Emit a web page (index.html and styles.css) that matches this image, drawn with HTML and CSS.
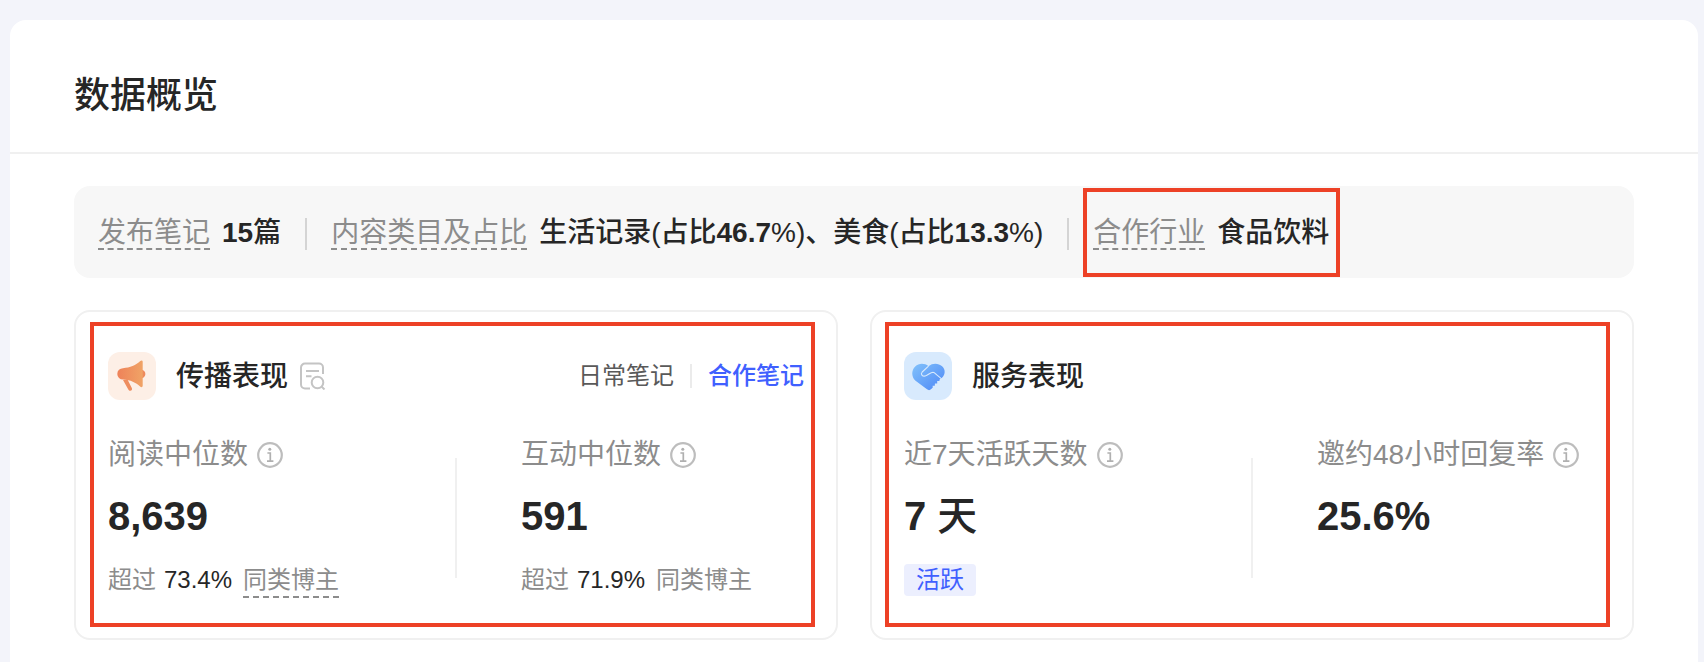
FILE: index.html
```html
<!DOCTYPE html>
<html lang="zh-CN">
<head>
  <meta charset="UTF-8" />
  <meta name="viewport" content="width=device-width, initial-scale=1.0"/>
  <title>数据概览</title>
  <link rel="stylesheet" href="styles.css">
</head>
<body>
  <!-- shared icon -->
  <svg class="defs" width="0" height="0" aria-hidden="true">
    <symbol id="info" viewBox="0 0 26 26">
      <circle cx="13" cy="13" r="11.8" fill="none" stroke="#bdbdbd" stroke-width="2.2"/>
      <circle cx="12.8" cy="7.2" r="1.5" fill="#b0b0b0"/>
      <path d="M10.4 11h2.9v8M10 19.2h6.4" fill="none" stroke="#b0b0b0" stroke-width="1.7"/>
    </symbol>
  </svg>

  <main class="panel">
    <header class="panel-header">
      <h2>数据概览</h2>
    </header>

    <div class="panel-body">
      <div class="summary">
        <div class="summary-item">
          <span class="summary-label dashed">发布笔记</span>
          <span class="summary-value"><b>15</b>篇</span>
        </div>
        <div class="summary-item">
          <span class="summary-label dashed">内容类目及占比</span>
          <span class="summary-value">生活记录(占比<b>46.7</b>%)、美食(占比<b>13.3</b>%)</span>
        </div>
        <div class="summary-item">
          <span class="summary-label dashed">合作行业</span>
          <span class="summary-value">食品饮料</span>
          <div class="mark mark-item"></div>
        </div>
      </div>

      <div class="cards">
        <section class="card">
          <div class="card-header">
            <svg class="card-icon" viewBox="0 0 48 48" aria-hidden="true">
              <defs>
                <linearGradient id="orange" x1="0" y1="0" x2="1" y2="0">
                  <stop offset="0" stop-color="#ee8259"/>
                  <stop offset="1" stop-color="#f0a366"/>
                </linearGradient>
              </defs>
              <rect width="48" height="48" rx="12" fill="#fdefe6"/>
              <circle cx="33.2" cy="22" r="4.2" fill="#ee8a5c"/>
              <path d="M15 28l4.500-.6 4.300 8.600c.7 1.500-.2 2.700-1.500 2.700-1 0-1.500-.4-2-1.300z" fill="#ee8d5f"/>
              <path d="M15 16.200c7-.4 13-3 17.300-7.100 1.200-1.200 2.400-.8 2.400.8v23.700c0 1.700-1.300 2.200-2.600 1-4.200-4-9.500-6.600-17.100-7A5.700 5.700 0 0 1 15 16.200z" fill="url(#orange)"/>
            </svg>
            <h3>传播表现</h3>
            <button class="detail-btn" type="button" aria-label="查看明细">
              <svg width="26" height="28" viewBox="0 0 26 28" fill="none" stroke="#c4c4c4" stroke-width="2">
                <path d="M23 12V5.500a4 4 0 0 0-4-4H5a4 4 0 0 0-4 4v17a4 4 0 0 0 4 4h5"/>
                <path d="M6 9h13M6 14.200h5.500"/>
                <circle cx="17.500" cy="20.500" r="5.800"/>
                <path d="M21.500 24.500l3 3"/>
              </svg>
            </button>
            <div class="tabs">
              <button class="tab" type="button">日常笔记</button>
              <button class="tab active" type="button">合作笔记</button>
            </div>
          </div>
          <div class="metrics">
            <div class="metric">
              <div class="metric-label">阅读中位数<svg class="info"><use href="#info"/></svg></div>
              <div class="metric-value">8,639</div>
              <div class="metric-note">超过<span class="percent">73.4%</span><span class="dashed">同类博主</span></div>
            </div>
            <div class="metric">
              <div class="metric-label">互动中位数<svg class="info"><use href="#info"/></svg></div>
              <div class="metric-value">591</div>
              <div class="metric-note">超过<span class="percent">71.9%</span>同类博主</div>
            </div>
          </div>
          <div class="mark mark-spread"></div>
        </section>

        <section class="card">
          <div class="card-header">
            <svg class="card-icon" viewBox="0 0 48 48" aria-hidden="true">
              <defs>
                <linearGradient id="blue" x1="0" y1="0" x2="1" y2="1">
                  <stop offset="0" stop-color="#82c2fb"/>
                  <stop offset="1" stop-color="#4c86f6"/>
                </linearGradient>
              </defs>
              <rect width="48" height="48" rx="12" fill="#d8eafd"/>
              <path d="M24.500 14.200C20.500 11 14.800 11 11.200 14.500c-4 4-3.800 10 0 14L23 37.300c1.300 1.100 2.800 1.100 4 0l1.800-1.800-.2-1.700 2.200-.1.100-2.200 2.300-.1v-2.300l2.200-.2.200-1.300 2.400-1.800c3.500-3.500 3.600-8.300.1-11.500-3.600-3.300-9.500-3.500-13.600-.1z" fill="url(#blue)"/>
              <path d="M24.500 14.200l-6.300 5.800c-2 2.200.2 4.600 3 4 3-.7 5-3.700 7.800-3.800 1.500 0 2.500 1.500 3.800 2.700l4.800 4" fill="none" stroke="#d8eafd" stroke-width="1.100"/>
            </svg>
            <h3>服务表现</h3>
          </div>
          <div class="metrics">
            <div class="metric">
              <div class="metric-label">近7天活跃天数<svg class="info"><use href="#info"/></svg></div>
              <div class="metric-value">7 <span class="unit">天</span></div>
              <span class="tag">活跃</span>
            </div>
            <div class="metric">
              <div class="metric-label">邀约48小时回复率<svg class="info"><use href="#info"/></svg></div>
              <div class="metric-value">25.6%</div>
            </div>
          </div>
          <div class="mark mark-service"></div>
        </section>
      </div>
    </div>
  </main>
</body>
</html>
```
FILE: styles.css
```css
* {
  box-sizing: border-box;
}
body {
  margin: 0;
  padding: 20px 6px 0 10px;
  background-color: #f3f4fa;
  color: #262626;
  font-family: "Liberation Sans", "Noto Sans CJK SC", sans-serif;
}
h2, h3 {
  margin: 0;
  font-weight: 500;
}
button {
  padding: 0;
  border: 0;
  background: none;
  font: inherit;
  cursor: pointer;
}
.defs {
  position: absolute;
}
.panel {
  min-height: calc(100vh - 20px);
  background-color: #fff;
  border-radius: 16px 16px 0 0;
}
.panel-header {
  padding: 52px 64px 32px;
  border-bottom: 2px solid #f0f0f0;
}
.panel-header h2 {
  font-size: 36px;
  line-height: 48px;
}
.panel-body {
  padding: 32px 64px 16px;
}
.dashed {
  border-bottom: 2px dashed #8c8c8c;
}

/* summary bar */
.summary {
  display: flex;
  padding: 32px 24px 28px;
  background-color: #f7f7f7;
  border-radius: 16px;
  font-size: 28px;
  line-height: 30px;
  white-space: nowrap;
}
.summary-item {
  position: relative;
  display: flex;
  gap: 12px;
  height: 32px;
}
.summary-item + .summary-item {
  margin-left: 24px;
}
.summary-item + .summary-item::before {
  content: "";
  width: 2px;
  margin-right: 12px;
  background-color: #d4d4d4;
}
.summary-label {
  color: #8c8c8c;
}
.summary-value {
  font-weight: 500;
}

/* cards */
.cards {
  display: grid;
  grid-template-columns: 1fr 1fr;
  gap: 32px;
  margin-top: 32px;
}
.card {
  position: relative;
  padding: 40px 32px;
  border: 2px solid #f0f0f0;
  border-radius: 16px;
}
.card-header {
  display: flex;
  align-items: center;
  height: 48px;
}
.card-icon {
  width: 48px;
  height: 48px;
  margin-right: 20px;
}
.card-header h3 {
  padding-top: 2px;
  font-size: 28px;
  line-height: 40px;
}
.detail-btn {
  height: 28px;
  margin-left: 12px;
}
.detail-btn svg {
  display: block;
}
.tabs {
  display: flex;
  margin-left: auto;
}
.tab {
  font-size: 24px;
  line-height: 24px;
  color: #595959;
}
.tab + .tab {
  margin-left: 16px;
  padding-left: 16px;
  border-left: 2px solid #ebebeb;
}
.tab.active {
  color: #4060ff;
  font-weight: 500;
}
.metrics {
  display: grid;
  grid-template-columns: 1fr 1fr;
  margin-top: 34px;
}
.metric {
  position: relative;
  height: 164px;
}
.metric + .metric {
  padding-left: 65px;
}
.metric + .metric::before {
  content: "";
  position: absolute;
  left: -1px;
  top: 24px;
  width: 2px;
  height: 120px;
  background-color: #f0f0f0;
}
.metric-label {
  display: flex;
  align-items: center;
  font-size: 28px;
  line-height: 42px;
  color: #8c8c8c;
  white-space: nowrap;
}
.info {
  width: 26px;
  height: 26px;
  margin-left: 9px;
}
.metric-value {
  margin-top: 16px;
  font-size: 40px;
  font-weight: 700;
  line-height: 48px;
}
.unit {
  font-weight: 500;
}
.metric-note {
  display: flex;
  margin-top: 24px;
  font-size: 24px;
  line-height: 32px;
  color: #8c8c8c;
}
.percent {
  margin: 0 11px 0 8px;
  color: #262626;
}
.tag {
  display: inline-block;
  margin-top: 24px;
  padding: 0 12px;
  border-radius: 4px;
  background-color: #eceffe;
  color: #4060ff;
  font-size: 24px;
  line-height: 32px;
}

/* red highlight frames */
.mark {
  position: absolute;
  border: 4px solid #ed4126;
  pointer-events: none;
}
.mark-item {
  top: -30px;
  right: -11px;
  bottom: -27px;
  left: 16px;
}
.mark-spread {
  top: 10px;
  right: 21px;
  bottom: 11px;
  left: 14px;
}
.mark-service {
  top: 10px;
  right: 22px;
  bottom: 11px;
  left: 13px;
}
```
